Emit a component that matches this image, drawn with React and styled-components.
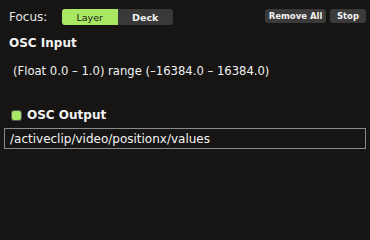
import React, { useState } from 'react';
import styled, { createGlobalStyle } from 'styled-components';

const GlobalStyle = createGlobalStyle`
  html, body {
    margin: 0;
    padding: 0;
    background: #161514;
  }
  body {
    font-family: "DejaVu Sans", "Liberation Sans", sans-serif;
    color: #f2f2f2;
  }
`;

const Panel = styled.div`
  width: 370px;
  height: 228px;
  box-sizing: border-box;
  padding: 9px 4px 0 4px;
  background: #161514;
  overflow: hidden;
`;

const TopBar = styled.div`
  display: flex;
  align-items: center;
  height: 16px;
`;

const Label = styled.span`
  font-size: 12px;
  color: #e8e8e8;
  margin-left: 5px;
  width: 53px;
`;

const Segmented = styled.div`
  display: flex;
  width: 111px;
  height: 16px;
  border-radius: 3px;
  overflow: hidden;
  background: #393939;
`;

const Segment = styled.button`
  flex: 1;
  border: none;
  padding: 0;
  margin: 0;
  font-family: inherit;
  font-size: 9.5px;
  font-weight: ${(p) => (p.active ? 'normal' : 'bold')};
  background: ${(p) => (p.active ? '#a9e862' : 'transparent')};
  color: ${(p) => (p.active ? '#1a1a1a' : '#f4f4f4')};
`;

const Actions = styled.div`
  display: flex;
  gap: 4px;
  margin-left: auto;
  margin-right: 0;
  align-self: flex-start;
`;

const SmallButton = styled.button`
  height: 14px;
  width: ${(p) => p.w}px;
  border: none;
  border-radius: 3px;
  padding: 0;
  background: #3a3a3a;
  color: #f0f0f0;
  font-family: inherit;
  font-size: 8.5px;
  font-weight: bold;
`;

const SectionTitle = styled.div`
  font-size: 12px;
  font-weight: bold;
  margin: ${(p) => p.m};
  display: flex;
  align-items: center;
  gap: 5px;
`;

const RangeText = styled.div`
  font-size: 11.6px;
  margin: 14px 0 0 9px;
`;

const Check = styled.span`
  width: 9px;
  height: 9px;
  border: 1px solid #555;
  border-radius: 3px;
  background: ${(p) => (p.on ? '#a9e862' : '#222')};
`;

const AddressInput = styled.input`
  display: block;
  box-sizing: border-box;
  width: 362px;
  height: 21px;
  margin-top: 6px;
  padding: 0 5px;
  border: 1px solid #8a8a8a;
  background: transparent;
  color: #f4f4f4;
  font-family: inherit;
  font-size: 12px;
  outline: none;
`;

export default function App() {
  const [focus, setFocus] = useState('layer');
  const [output, setOutput] = useState(true);
  const [address, setAddress] = useState('/activeclip/video/positionx/values');

  return (
    <>
      <GlobalStyle />
      <Panel>
        <TopBar>
          <Label>Focus:</Label>
          <Segmented>
            <Segment active={focus === 'layer'} onClick={() => setFocus('layer')}>Layer</Segment>
            <Segment active={focus === 'deck'} onClick={() => setFocus('deck')}>Deck</Segment>
          </Segmented>
          <Actions>
            <SmallButton w={61}>Remove All</SmallButton>
            <SmallButton w={36}>Stop</SmallButton>
          </Actions>
        </TopBar>
        <SectionTitle m="11px 0 0 5px">OSC Input</SectionTitle>
        <RangeText>(Float 0.0 – 1.0) range (–16384.0 – 16384.0)</RangeText>
        <SectionTitle m="30px 0 0 7px" onClick={() => setOutput(!output)}>
          <Check on={output} />
          OSC Output
        </SectionTitle>
        <AddressInput value={address} onChange={(e) => setAddress(e.target.value)} />
      </Panel>
    </>
  );
}
